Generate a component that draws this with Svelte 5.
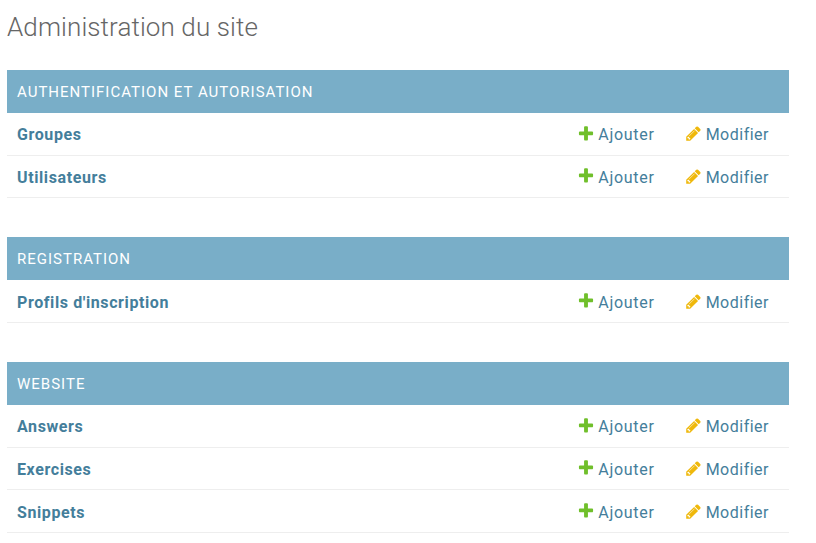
<script>
    const modules = [
        { caption: 'Authentification et autorisation', models: ['Groupes', 'Utilisateurs'] },
        { caption: 'Registration', models: ["Profils d'inscription"] },
        { caption: 'Website', models: ['Answers', 'Exercises', 'Snippets'] },
    ];

    const plus = 'M1600 736v192q0 40-28 68t-68 28h-416v416q0 40-28 68t-68 28h-192q-40 0-68-28t-28-68v-416h-416q-40 0-68-28t-28-68v-192q0-40 28-68t68-28h416v-416q0-40 28-68t68-28h192q40 0 68 28t28 68v416h416q40 0 68 28t28 68z';
    const pencil = 'M491 1536l91-91-235-235-91 91v107h128v128h107zm523-928q0-22-22-22-10 0-17 7l-542 542q-7 7-7 17 0 22 22 22 10 0 17-7l542-542q7-7 7-17zm-54-192l416 416-832 832h-416v-416zm683 96q0 53-37 90l-166 166-416-416 166-165q36-38 90-38 53 0 91 38l235 234q37 39 37 91z';
</script>

<style>
    :global(body) {
        font-family: 'Roboto', sans-serif;
        background-color: #fff;
        margin: 0;
        padding: 0;
    }

    .content {
        width: 782px;
        padding: 12px 0 0 7px;
    }

    h1 {
        margin: 0 0 27px;
        font-size: 26px;
        line-height: 31px;
        font-weight: 300;
        letter-spacing: 0.1px;
        color: #666;
    }

    .module {
        margin-bottom: 39px;
    }

    .module:last-child {
        margin-bottom: 0;
    }

    .caption {
        height: 42px;
        padding: 1px 10px 0;
        display: flex;
        align-items: center;
        background: #79aec8;
        color: #fff;
        font-size: 15px;
        letter-spacing: 1px;
        text-transform: uppercase;
    }

    .row {
        height: 39.67px;
        padding: 2px 20px 0 10px;
        display: flex;
        align-items: center;
        border-bottom: 1px solid #eee;
        font-size: 16px;
        letter-spacing: 0.5px;
        color: #447e9b;
    }

    .name {
        flex: 1;
        font-weight: 700;
        letter-spacing: 0.6px;
    }

    .link {
        display: flex;
        align-items: center;
        gap: 4px;
    }

    .add {
        margin-right: 30px;
        letter-spacing: 0.7px;
        gap: 3.5px;
    }

    svg {
        width: 18px;
        height: 18px;
        margin-top: -2px;
    }

    svg.edit {
        width: 17px;
        height: 17px;
    }
</style>

<div class="content">
    <h1>Administration du site</h1>
    {#each modules as mod}
        <div class="module">
            <div class="caption">{mod.caption}</div>
            {#each mod.models as model}
                <div class="row">
                    <span class="name">{model}</span>
                    <span class="link add">
                        <svg viewBox="0 0 1792 1792"><path d={plus} fill="#70bf2b" /></svg>
                        Ajouter
                    </span>
                    <span class="link">
                        <svg class="edit" viewBox="0 0 1792 1792"><path d={pencil} fill="#efb80b" /></svg>
                        Modifier
                    </span>
                </div>
            {/each}
        </div>
    {/each}
</div>
